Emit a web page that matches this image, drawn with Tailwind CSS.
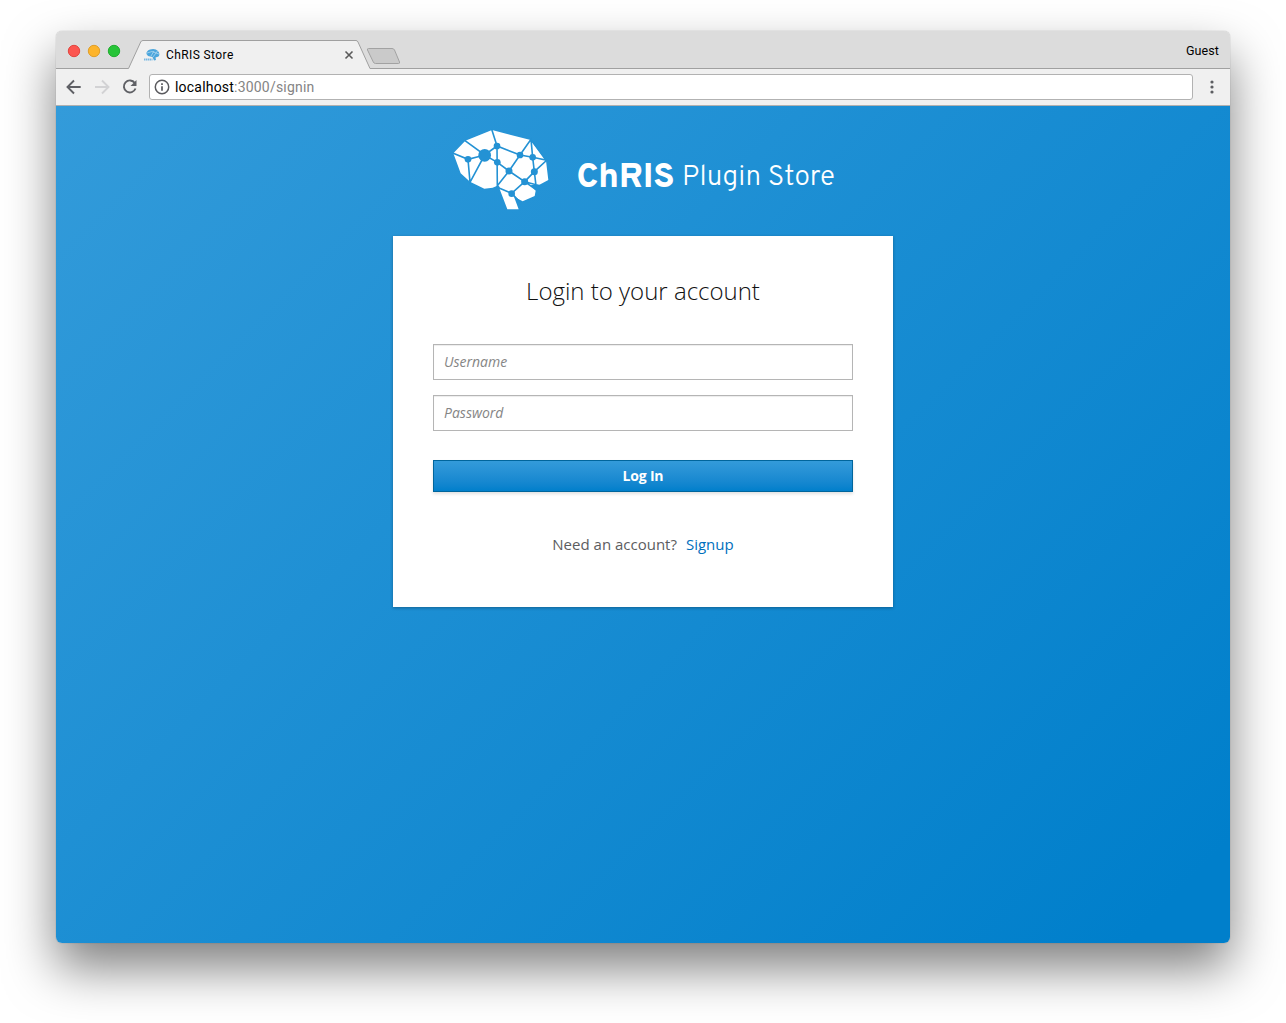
<!DOCTYPE html>
<html lang="en">
<head>
<meta charset="utf-8">
<title>ChRIS Store</title>
<script src="https://cdn.jsdelivr.net/npm/@tailwindcss/browser@4"></script>
</head>
<body class="bg-white w-[1286px] h-[1023px] overflow-hidden pt-[31px] pl-14 font-['Open_Sans',sans-serif]">
<div class="w-[1174px] h-[912px] rounded-[6px] shadow-[0_0_1px_rgba(0,0,0,0.45),0_25px_50px_rgba(0,0,0,0.5)]">
<div class="w-full h-full rounded-[6px] overflow-hidden flex flex-col">
  <!-- tab strip -->
  <header class="h-[38px] shrink-0 bg-[#dcdcdc] relative font-[Roboto,sans-serif] text-black">
    <svg class="absolute inset-0" width="1174" height="38" viewBox="0 0 1174 38" fill="none">
      <path d="M72.500 38L84.700 11Q85.300 9.500 87 9.500H300Q301.300 9.500 302 11L314 38Z" fill="#f0f0f0"/>
      <path d="M0 37.500H72.500L84.700 11Q85.300 9.500 87 9.500H300Q301.300 9.500 302 11L314 37.500H1174" stroke="#a0a0a0"/>
      <path d="M312.500 17.500H336Q337.800 17.500 338.500 19L343.500 31Q344 32.500 342.500 32.500H319.500Q318 32.500 317.300 31L311.500 19Q311 17.500 312.500 17.500Z" fill="#cacaca" stroke="#a2a2a2"/>
      <g stroke-width="1">
        <circle cx="18" cy="20" r="5.700" fill="#fc5650" stroke="#e2453f"/>
        <circle cx="38" cy="20" r="5.700" fill="#fdb42b" stroke="#e09e28"/>
        <circle cx="58" cy="20" r="5.700" fill="#27c438" stroke="#20ad2f"/>
      </g>
      <path d="M289.500 20.500L296.500 27.500M296.500 20.500L289.500 27.500" stroke="#5a5a5a" stroke-width="1.600"/>
      <path d="M90.500 23Q90 20 94 18.500Q99 17 102 20Q104.500 23 102.500 25.500L99.500 26.500L100 29L98 29.500L96.500 26L92 25Z" fill="#4aa5dc"/>
      <path d="M91 22L96 20.500L103 23M95 25L98 20M97 26L101.500 20" stroke="#b9dcf2" stroke-width=".7"/>
      <path d="M88 28.500H96.500" stroke="#77b7e2" stroke-width="2" stroke-dasharray="1.400 .5"/>
    </svg>
    <div class="relative h-full flex items-center justify-between pl-[110px] pr-[11px] pt-[9px] text-[12px]">
      <span class="tracking-[0.4px]">ChRIS Store</span>
      <span class="-mt-[6px] text-[12.500px] tracking-[0.1px]">Guest</span>
    </div>
  </header>
  <!-- toolbar -->
  <div class="h-[37px] shrink-0 bg-[#f0f0f0] border-b border-[#b0b0b0] flex items-center pl-[10px] font-[Roboto,sans-serif]">
    <svg width="78" height="20" viewBox="0 0 78 20" fill="none" stroke-width="1.900">
      <path d="M14.700 10H2.500M8 3.500L1.500 10L8 16.500" stroke="#5f6065"/>
      <path d="M29 10H42M36 3.500L42.500 10L36 16.500" stroke="#d2d2d4"/>
      <path d="M68.800 6A6 6 0 1 0 69.500 11.500" stroke="#5f6065"/>
      <path d="M70.500 3V9H64.500Z" fill="#5f6065"/>
    </svg>
    <div class="ml-[5px] w-[1044px] h-[26px] bg-white border border-[#b2b2b2] rounded-[3px] flex items-center pl-[5px] text-[14px] text-[#848484]">
      <svg class="mr-[5px] -ml-px" width="16" height="16" viewBox="0 0 15 15" fill="none" stroke="#5a5a5e"><circle cx="7.500" cy="7.500" r="6.300" stroke-width="1.400"/><path d="M7.500 6.700V11M7.500 4V5.600" stroke-width="1.600"/></svg>
      <span class="tracking-[0.2px]"><span class="text-black">localhost</span>:3000/signin</span>
    </div>
    <svg class="ml-[16px]" width="6" height="16" viewBox="0 0 6 16" fill="#5c5d61"><circle cx="3" cy="3" r="1.600"/><circle cx="3" cy="8" r="1.600"/><circle cx="3" cy="13" r="1.600"/></svg>
  </div>
  <!-- page -->
  <main class="flex-1 bg-linear-[135deg,#339bda_0%,#007fcb_95%] flex flex-col items-center">
    <svg class="mt-[14px] shrink-0 ml-[2px]" width="410" height="100" viewBox="0 0 410 100">
      <g transform="translate(1 0) scale(.33333)">
        <path fill="#fff" d="M40 100L76 62L156 30L272 60L318 122L325 180L297 195L272 195L287 212L284 228L248 244L222 230L236 268H202L178 205L172 197L158 203L133 206L90 185L62 160Z"/>
        <path fill="none" stroke="#2492d4" stroke-width="4.800" d="M38 99L84 118L134 105L172 127L207 153L254 185L283 155L320 121L278 112L240 105L171 78L134 105L74 61M155 28L171 78L172 202M84 118L90 187L134 105M172 197L207 153L240 105L273 58L278 112L283 155L288 197M272 58L320 123M254 185L215 220L177 204M254 185L287 208M215 220L240 246M172 196L180 207M254 185L300 197"/>
        <g fill="#2492d4"><circle cx="134" cy="106" r="19"/><circle cx="84" cy="118" r="10"/><circle cx="171" cy="78" r="10"/><circle cx="172" cy="127" r="10"/><circle cx="207" cy="153" r="10.500"/><circle cx="240" cy="105" r="10"/><circle cx="278" cy="112" r="10"/><circle cx="283" cy="155" r="10.500"/><circle cx="254" cy="185" r="10.500"/><circle cx="215" cy="221" r="10"/></g>
      </g>
      <g fill="#fff" class="font-[Overpass,Roboto,sans-serif]">
        <text x="137.500" y="67.300" font-size="33.500" class="font-extrabold" textLength="98" lengthAdjust="spacingAndGlyphs">ChRIS</text>
        <text x="243" y="65" font-size="28" class="font-light" textLength="153">Plugin Store</text>
      </g>
    </svg>
    <form class="mt-4 w-[500px] h-[371px] bg-white shadow-[0_1px_3px_rgba(0,0,0,0.3)] px-10 flex flex-col">
      <h1 class="mt-[38px] h-[34px] leading-[34px] text-center text-[24px] font-light text-[#111]">Login to your account</h1>
      <input class="mt-9 h-9 shrink-0 border border-[#b5b5b5] px-[10px] pb-[2px] text-[14px] italic placeholder:text-[#858585] shadow-[inset_0_1px_1px_rgba(0,0,0,0.075)]" placeholder="Username">
      <input class="mt-[15px] h-9 shrink-0 border border-[#b5b5b5] px-[10px] pb-[2px] text-[14px] italic placeholder:text-[#858585] shadow-[inset_0_1px_1px_rgba(0,0,0,0.075)]" placeholder="Password">
      <button type="button" class="mt-[29px] h-8 shrink-0 border border-[#00659c] bg-linear-to-b from-[#339bda] to-[#007fcb] text-white text-[14px] font-bold tracking-[-0.2px] leading-[30px] shadow-[0_2px_3px_rgba(0,0,0,0.12)]">Log In</button>
      <p class="mt-[41px] flex justify-center gap-[9px] text-[15px] leading-[22px] text-[#5c5d5f]"><span>Need an account?</span><a class="text-[#0070bd]">Signup</a></p>
    </form>
  </main>
</div>
</div>
</body>
</html>
